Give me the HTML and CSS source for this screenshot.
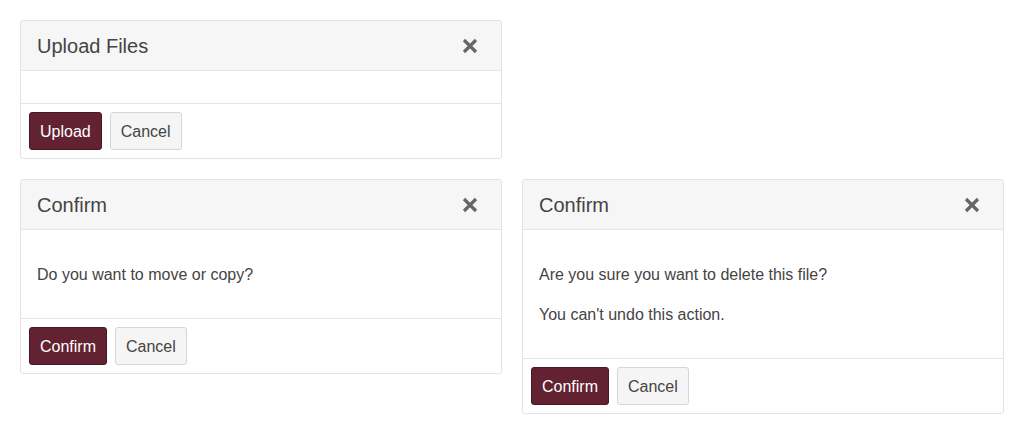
FILE: index.html
```html
<!DOCTYPE html>
<html>
<head>
<meta charset="utf-8">
<link rel="stylesheet" href="styles.css">
</head>
<body>
<div class="grid">
  <div class="modal">
    <div class="modal-header">
      <h4 class="modal-title">Upload Files</h4>
      <button class="close" aria-label="Close"><svg viewBox="0 0 16 16" width="16" height="16"><path d="M2 2 L14 14 M14 2 L2 14" stroke="#666" stroke-width="3.2" stroke-linecap="butt"/></svg></button>
    </div>
    <div class="modal-body"></div>
    <div class="modal-footer">
      <button class="btn btn-primary">Upload</button>
      <button class="btn btn-default">Cancel</button>
    </div>
  </div>
  <div class="spacer"></div>
  <div class="modal">
    <div class="modal-header">
      <h4 class="modal-title">Confirm</h4>
      <button class="close" aria-label="Close"><svg viewBox="0 0 16 16" width="16" height="16"><path d="M2 2 L14 14 M14 2 L2 14" stroke="#666" stroke-width="3.2" stroke-linecap="butt"/></svg></button>
    </div>
    <div class="modal-body">
      <p>Do you want to move or copy?</p>
    </div>
    <div class="modal-footer">
      <button class="btn btn-primary">Confirm</button>
      <button class="btn btn-default">Cancel</button>
    </div>
  </div>
  <div class="modal">
    <div class="modal-header">
      <h4 class="modal-title">Confirm</h4>
      <button class="close" aria-label="Close"><svg viewBox="0 0 16 16" width="16" height="16"><path d="M2 2 L14 14 M14 2 L2 14" stroke="#666" stroke-width="3.2" stroke-linecap="butt"/></svg></button>
    </div>
    <div class="modal-body">
      <p>Are you sure you want to delete this file?</p>
      <p>You can't undo this action.</p>
    </div>
    <div class="modal-footer">
      <button class="btn btn-primary">Confirm</button>
      <button class="btn btn-default">Cancel</button>
    </div>
  </div>
</div>
</body>
</html>
```
FILE: styles.css
```css
* { box-sizing: border-box; }
html, body { margin: 0; background: #fff; }
body {
  font-family: "Liberation Sans", Arial, sans-serif;
  font-size: 16px;
  line-height: 24px;
  color: #444;
  padding: 20px;
}
.grid {
  display: grid;
  grid-template-columns: 482px 482px;
  column-gap: 20px;
  row-gap: 20px;
  align-items: start;
}
.modal {
  border: 1px solid #e3e3e3;
  border-radius: 3px;
  background: #fff;
}
.modal-header {
  background: #f6f6f6;
  border-bottom: 1px solid #e5e5e5;
  height: 50px;
  padding: 0 16px;
  display: flex;
  align-items: center;
  justify-content: space-between;
  border-radius: 3px 3px 0 0;
}
.modal-title {
  margin: 0;
  font-size: 20px;
  font-weight: normal;
  color: #444;
  line-height: 26px;
}
.close {
  border: 0;
  background: none;
  padding: 0;
  margin-right: 7px;
  width: 16px;
  height: 16px;
  display: flex;
  cursor: pointer;
}
.modal-body {
  padding: 17px 16px 15px;
}
.modal-body:empty {
  padding: 16px;
}
.modal-body p {
  margin: 16px 0;
}
.modal-footer {
  border-top: 1px solid #e5e5e5;
  padding: 8px;
  display: flex;
  gap: 8px;
}
.btn {
  font-family: inherit;
  font-size: 16px;
  line-height: 24px;
  padding: 7px 10px 5px;
  border-radius: 3px;
  border: 1px solid;
  cursor: pointer;
}
.btn-primary {
  background: #622232;
  border-color: #4a1724;
  color: #fff;
}
.btn-default {
  background: #f5f5f5;
  border-color: #d6d6d6;
  color: #444;
}
```
